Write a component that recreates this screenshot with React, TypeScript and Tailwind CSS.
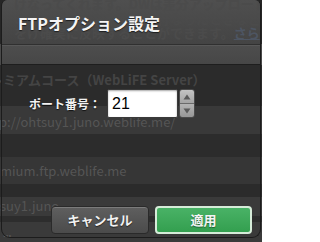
const FONT = '"Noto Sans CJK JP", "Noto Sans", "Liberation Sans", sans-serif';

// rows of the page that sits behind the sheet
const PAGE_ROWS = [
  { h: 'h-[21px]', bg: 'bg-[#4a4a4a]', text: '', cls: '' },
  { h: 'h-[41px]', bg: 'bg-[#2b2b2b]', text: 'レミアムコース（WebLiFE Server）', cls: 'font-bold text-[#444444] -ml-[10px] pt-[7px]' },
  { h: 'h-[28px]', bg: 'bg-[#393939]', text: 'p://ohtsuy1.juno.weblife.me/', cls: 'text-[#555555] -ml-[1px] pt-[8px]' },
  { h: 'h-[23px]', bg: 'bg-[#2c2c2c]', text: '', cls: '' },
  { h: 'h-[27px]', bg: 'bg-[#363636]', text: 'mium.ftp.weblife.me', cls: 'text-[#555555] pt-[6px]' },
  { h: 'h-[13px]', bg: 'bg-[#2b2b2b]', text: '', cls: '' },
  { h: 'h-[19px]', bg: 'bg-[#3a3a3a]', text: 'suy1.juno', cls: 'text-[#555555] pt-[1px]' },
  { h: 'h-[6px]', bg: 'bg-[#2d2d2d]', text: '', cls: '' },
  { h: 'h-[20px]', bg: 'bg-[#3a3a3a]', text: '***', cls: 'text-[6px] text-[#666] pt-[8px] pl-[3px]' },
];

function Stepper() {
  return (
    <div className="flex flex-col w-[16px] h-[29px] rounded-[3px] border border-[#4a4a4a] overflow-hidden">
      <div className="flex-1 flex items-center justify-center bg-gradient-to-b from-[#c4c4c4] to-[#a4a4a4] border-b border-[#6a6a6a]">
        <svg width="8" height="6" viewBox="0 0 8 6">
          <path d="M4 0.5 L7.5 5.5 L0.5 5.5 Z" fill="#5a5a5a" />
        </svg>
      </div>
      <div className="flex-1 flex items-center justify-center bg-gradient-to-b from-[#b4b4b4] to-[#979797]">
        <svg width="8" height="6" viewBox="0 0 8 6">
          <path d="M0.5 0.5 L7.5 0.5 L4 5.5 Z" fill="#5a5a5a" />
        </svg>
      </div>
    </div>
  );
}

export default function App() {
  return (
    <div className="relative w-[262px] h-[242px] overflow-hidden bg-[#262626]" style={{ fontFamily: FONT }}>
      {/* Page behind */}
      <div className="flex flex-col text-[13px] leading-[15px] pt-[44px]">
        {PAGE_ROWS.map((row, i) => (
          <div key={i} className={`${row.h} ${row.bg} whitespace-nowrap overflow-hidden`}>
            {row.text && <div className={row.cls}>{row.text}</div>}
          </div>
        ))}
      </div>

      {/* Sheet */}
      <div className="absolute inset-x-[1px] top-0 bottom-[4px] flex flex-col rounded-t-[6px] rounded-b-[9px] border-x border-b border-[#1c1c1c] overflow-hidden">
        {/* Header, with the page text faintly showing through */}
        <div className="relative h-[44px] bg-gradient-to-b from-[#4f4f4f] to-[#444444] overflow-hidden">
          <div className="absolute left-[12px] -top-[3px] text-[13px] leading-[14.5px] font-bold text-[#4b4b4b] whitespace-nowrap">
            <div>けなってくれます。DWは差分アップロードに対応</div>
            <div>のアップロードや削除を行なったときなど、差分検知</div>
            <div>をけ確実に反映することができます。<span className="text-[#4d5562] underline decoration-[#4d5562]">さら</span></div>
          </div>
          <div className="relative pl-[16px] pt-[12px] text-[16px] leading-[22px] font-bold text-[#f4f4f4] [text-shadow:0_1px_1px_rgba(0,0,0,0.6)]">
            FTPオプション設定
          </div>
        </div>
        <div className="h-[1px] bg-[#303030]" />
        <div className="h-[19px] bg-gradient-to-b from-[#4d4d4d] to-[#474747] border-t border-[#585858]" />
        <div className="h-[1px] bg-[#1e1e1e]" />

        {/* Body */}
        <div className="flex-1 flex flex-col">
          <div className="flex items-center pl-[27px] pt-[24px] gap-[6px]">
            <span className="text-[12px] font-bold text-[#f2f2f2] [text-shadow:0_1px_1px_rgba(0,0,0,0.7)]">ポート番号：</span>
            <div className="flex items-center gap-[1px]">
              <div className="w-[71px] h-[29px] bg-white border border-[#3a3a3a] rounded-[2px] shadow-[inset_0_1px_2px_rgba(0,0,0,0.35)] flex items-center pl-[4px] text-[16px] text-black" style={{ fontFamily: '"Liberation Sans", sans-serif' }}>
                21
              </div>
              <Stepper />
            </div>
          </div>
        </div>

        {/* Footer */}
        <div className="flex justify-end gap-[6px] pr-[8px] pb-[3px]">
          <button className="w-[98px] h-[28px] rounded-[4px] border border-[#2a2a2a] bg-gradient-to-b from-[#5f5f5f] to-[#4b4b4b] shadow-[inset_0_1px_0_rgba(255,255,255,0.18)] text-[13px] font-bold text-[#f2f2f2] [text-shadow:0_1px_1px_rgba(0,0,0,0.6)]">
            キャンセル
          </button>
          <button className="w-[97px] h-[28px] rounded-[4px] border-2 border-[#d6ecd9] bg-gradient-to-b from-[#49b266] to-[#339f4f] text-[13px] font-bold text-[#f4f4f4] [text-shadow:0_1px_1px_rgba(0,0,0,0.4)]">
            適用
          </button>
        </div>
      </div>
    </div>
  );
}
